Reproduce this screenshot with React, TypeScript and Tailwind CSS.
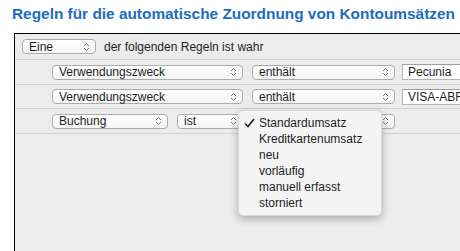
import React from "react";

const Chevrons = () => (
  <svg width="7" height="10" viewBox="0 0 7 10" className="shrink-0">
    <path d="M1 4 L3.5 1.5 L6 4" fill="none" stroke="#7a7a7a" strokeWidth="1" />
    <path d="M1 6 L3.5 8.5 L6 6" fill="none" stroke="#7a7a7a" strokeWidth="1" />
  </svg>
);

function Popup({ label, width }: { label: string; width: string }) {
  return (
    <div
      className={`${width} h-[15px] shrink-0 flex items-center justify-between pl-[6px] pr-[5px] rounded-[4px] border border-[#acacac] bg-gradient-to-b from-[#ffffff] to-[#f4f4f4] text-[12px] leading-none text-[#1e1e1e] whitespace-nowrap`}
    >
      <span>{label}</span>
      <Chevrons />
    </div>
  );
}

function TextField({ value }: { value: string }) {
  return (
    <div className="w-[110px] h-[16px] shrink-0 flex items-center pl-[5px] overflow-hidden whitespace-nowrap border border-[#b4b4b4] border-t-[#9e9e9e] bg-white text-[12px] leading-none text-[#1e1e1e]">
      {value}
    </div>
  );
}

const menuItems = [
  "Standardumsatz",
  "Kreditkartenumsatz",
  "neu",
  "vorläufig",
  "manuell erfasst",
  "storniert",
];

export default function App() {
  return (
    <div className="relative w-[460px] h-[251px] overflow-hidden bg-white font-['Liberation_Sans',Arial,sans-serif]">
      <h1 className="pl-[12px] pt-[4px] h-[24px] text-[15.4px] leading-[20px] font-bold text-[#1b6cbf] whitespace-nowrap">
        Regeln für die automatische Zuordnung von Kontoumsätzen
      </h1>

      <div className="mt-[9px] ml-[14px] w-[500px] h-[240px] border border-black bg-[#ececec]">
        <div className="h-[26px] flex items-center gap-[8px] pl-[7px] border-b border-[#d2d2d2]">
          <Popup label="Eine" width="w-[74px]" />
          <span className="text-[12px] text-[#1e1e1e]">der folgenden Regeln ist wahr</span>
        </div>

        <div className="h-[25px] flex items-center pl-[37px] border-b border-[#d2d2d2]">
          <Popup label="Verwendungszweck" width="w-[191px]" />
          <div className="ml-[9px]">
            <Popup label="enthält" width="w-[143px]" />
          </div>
          <div className="ml-[7px]">
            <TextField value="Pecunia" />
          </div>
        </div>

        <div className="h-[24px] flex items-center pl-[37px] border-b border-[#d2d2d2]">
          <Popup label="Verwendungszweck" width="w-[191px]" />
          <div className="ml-[9px]">
            <Popup label="enthält" width="w-[143px]" />
          </div>
          <div className="ml-[7px]">
            <TextField value="VISA-ABRECHNUNG" />
          </div>
        </div>

        <div className="h-[25px] flex items-center pl-[37px] border-b border-[#d2d2d2]">
          <Popup label="Buchung" width="w-[116px]" />
          <div className="ml-[9px]">
            <Popup label="ist" width="w-[66px]" />
          </div>
          <div className="ml-[9px]">
            <Popup label="" width="w-[143px]" />
          </div>
        </div>
      </div>

      <div className="absolute left-[238px] top-[110px] w-[144px] py-[4px] rounded-[5px] bg-[#f4f4f4] border border-[#d9d9d9] shadow-[0_3px_8px_rgba(0,0,0,0.28)]">
        {menuItems.map((item, i) => (
          <div key={item} className="relative h-[16px] flex items-center pl-[20px] text-[12px] leading-none text-[#1e1e1e]">
            {i === 0 && (
              <svg width="11" height="10" viewBox="0 0 11 10" className="absolute left-[5px] top-[3px]">
                <path d="M1 5.5 L4 8.5 L10 1" fill="none" stroke="#1e1e1e" strokeWidth="1.6" />
              </svg>
            )}
            {item}
          </div>
        ))}
      </div>
    </div>
  );
}
